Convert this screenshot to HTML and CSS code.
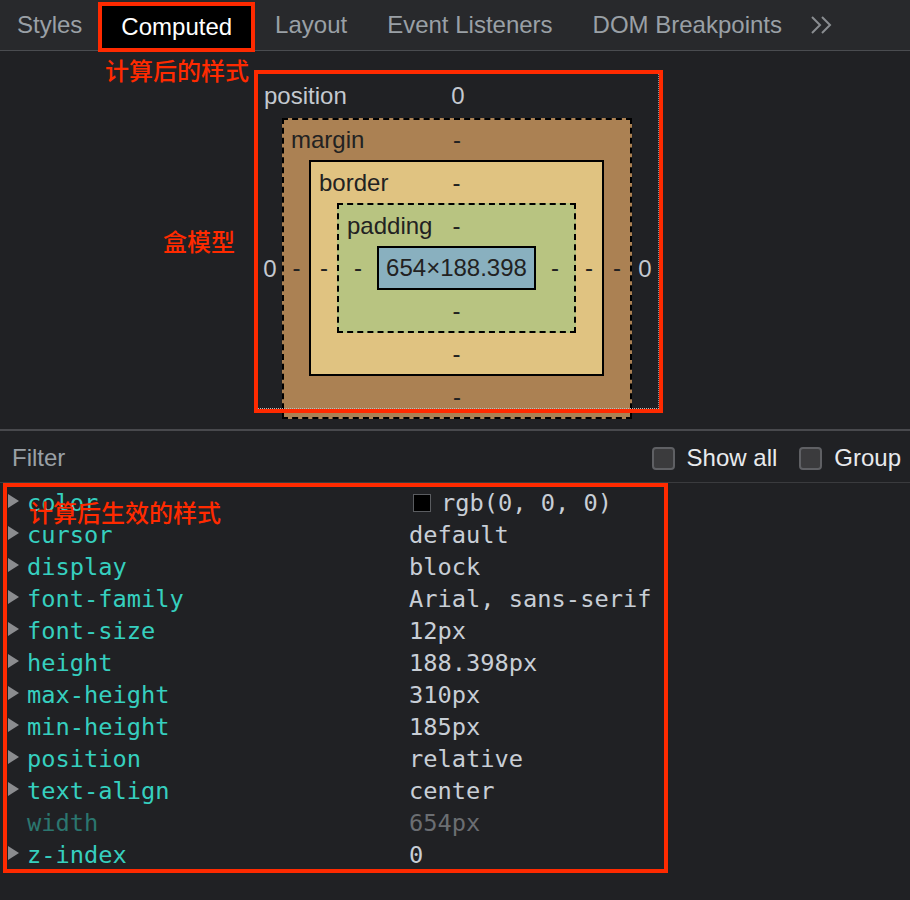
FILE: index.html
```html
<!DOCTYPE html>
<html lang="en">
<head>
<meta charset="utf-8">
<title>Computed</title>
<link rel="stylesheet" href="styles.css">
</head>
<body>
<div class="page">
  <div class="tabbar">
    <div class="tab first">Styles</div>
    <div class="tab active">Computed</div>
    <div class="tab">Layout</div>
    <div class="tab">Event Listeners</div>
    <div class="tab">DOM Breakpoints</div>
    <div class="more">
      <svg width="24" height="20" viewBox="0 0 24 20"><polyline points="2,2 10,10 2,18" fill="none" stroke="#8a8d91" stroke-width="2"/><polyline points="12,2 20,10 12,18" fill="none" stroke="#8a8d91" stroke-width="2"/></svg>
    </div>
  </div>

  <div class="bm-panel">
    <div class="bm bm-position">
      <div class="bm-top"><span class="bm-label">position</span><span class="bm-val">0</span><span></span></div>
      <div class="bm-side">0</div>
      <div class="bm bm-margin">
        <div class="bm-top"><span class="bm-label">margin</span><span class="bm-val">-</span><span></span></div>
        <div class="bm-side">-</div>
        <div class="bm bm-border">
          <div class="bm-top"><span class="bm-label">border</span><span class="bm-val">-</span><span></span></div>
          <div class="bm-side">-</div>
          <div class="bm bm-padding">
            <div class="bm-top"><span class="bm-label">padding</span><span class="bm-val">-</span><span></span></div>
            <div class="bm-side">-</div>
            <div class="bm-content">654×188.398</div>
            <div class="bm-side">-</div>
            <div class="bm-bottom">-</div>
          </div>
          <div class="bm-side">-</div>
          <div class="bm-bottom">-</div>
        </div>
        <div class="bm-side">-</div>
        <div class="bm-bottom">-</div>
      </div>
      <div class="bm-side">0</div>
    </div>
  </div>

  <div class="filter-row">
    <span class="filter">Filter</span>
    <div class="checks">
      <label class="check"><span class="box"></span>Show all</label>
      <label class="check"><span class="box"></span>Group</label>
    </div>
  </div>

  <div class="props">
    <div class="prop"><span class="tri"></span><span class="name">color</span><span class="val"><span class="swatch"></span>rgb(0, 0, 0)</span></div>
    <div class="prop"><span class="tri"></span><span class="name">cursor</span><span class="val">default</span></div>
    <div class="prop"><span class="tri"></span><span class="name">display</span><span class="val">block</span></div>
    <div class="prop"><span class="tri"></span><span class="name">font-family</span><span class="val">Arial, sans-serif</span></div>
    <div class="prop"><span class="tri"></span><span class="name">font-size</span><span class="val">12px</span></div>
    <div class="prop"><span class="tri"></span><span class="name">height</span><span class="val">188.398px</span></div>
    <div class="prop"><span class="tri"></span><span class="name">max-height</span><span class="val">310px</span></div>
    <div class="prop"><span class="tri"></span><span class="name">min-height</span><span class="val">185px</span></div>
    <div class="prop"><span class="tri"></span><span class="name">position</span><span class="val">relative</span></div>
    <div class="prop"><span class="tri"></span><span class="name">text-align</span><span class="val">center</span></div>
    <div class="prop dim"><span class="notri"></span><span class="name">width</span><span class="val">654px</span></div>
    <div class="prop"><span class="tri"></span><span class="name">z-index</span><span class="val">0</span></div>
  </div>

  <div class="note note-computed">计算后的样式</div>
  <div class="note note-box">盒模型</div>
  <div class="note note-props">计算后生效的样式</div>
  <div class="mark mark-box"></div>
  <div class="mark mark-props"></div>
</div>
</body>
</html>
```

FILE: styles.css
```css
* { box-sizing: border-box; }

html, body {
  margin: 0;
  padding: 0;
  background: #202124;
}

.page {
  position: relative;
  width: 910px;
  height: 900px;
  overflow: hidden;
  font-family: "Liberation Sans", Arial, sans-serif;
  font-size: 24px;
}

/* Tabs */
.tabbar {
  display: flex;
  height: 51px;
  background: #28292c;
  border-bottom: 1px solid #4a4c50;
}
.tab {
  display: flex;
  align-items: center;
  padding: 0 20px;
  color: #9aa0a6;
  white-space: nowrap;
}
.tab.first { padding: 0 16px 0 17px; }
.tab.active {
  margin-top: 2px;
  height: 50px;
  padding: 0 19px;
  margin-bottom: -1px;
  background: #000;
  color: #fff;
  border: 4px solid #ff2a00;
}
.more {
  display: flex;
  align-items: center;
  margin-left: 8px;
}
.more svg { display: block; }

/* Box model */
.bm-panel {
  height: 380px;
  padding: 22px 0 0 6px;
  display: flex;
  justify-content: center;
  align-items: flex-start;
  border-bottom: 2px solid #48494d;
}
.bm {
  display: grid;
  position: relative;
}
.bm-top {
  grid-column: 1 / -1;
  display: grid;
  grid-template-columns: 1fr auto 1fr;
  align-items: center;
}
.bm-label { justify-self: start; padding-left: 8px; }
.bm-side {
  display: flex;
  align-items: center;
  justify-content: center;
}
.bm-bottom {
  grid-column: 1 / -1;
  display: flex;
  align-items: center;
  justify-content: center;
}

.bm-position {
  width: 402px;
  height: 336px;
  border: 1px dotted #8c8f94;
  color: #c4c9d0;
  grid-template-columns: 24px 350px 26px;
  grid-template-rows: 44px 301px;
}
.bm-position::after {
  content: "";
  position: absolute;
  left: -1px;
  right: -1px;
  bottom: -1px;
  border-bottom: 1px dotted #b9bcc0;
  z-index: 2;
}
.bm-position > .bm-top .bm-label { padding-left: 6px; }

.bm-margin {
  background: #ab8153;
  border: 2px dashed #000;
  color: #222;
  grid-template-columns: 25px 295px 26px;
  grid-template-rows: 40px 216px 41px;
}
.bm-margin > .bm-top .bm-label { padding-left: 7px; }

.bm-border {
  background: #e0c381;
  border: 2px solid #000;
  grid-template-columns: 26px 239px 26px;
  grid-template-rows: 41px 130px 41px;
}

.bm-padding {
  background: #b8c481;
  border: 2px dashed #000;
  grid-template-columns: 38px 159px 38px;
  grid-template-rows: 41px 44px 41px;
}

.bm-content {
  background: #89b0bf;
  border: 2px solid #000;
  display: flex;
  align-items: center;
  justify-content: center;
  color: #222;
}

/* Filter */
.filter-row {
  display: flex;
  align-items: center;
  justify-content: space-between;
  height: 52px;
  padding: 3px 9px 0 12px;
  border-bottom: 1px solid #3a3b3e;
}
.filter { color: #9aa0a6; }
.checks { display: flex; align-items: center; gap: 22px; }
.check {
  display: flex;
  align-items: center;
  color: #e8eaed;
}
.box {
  width: 23px;
  height: 23px;
  margin-right: 12px;
  border: 2px solid #5f6064;
  border-radius: 4px;
  background: #3b3b3d;
}

/* Properties */
.props {
  padding-top: 4px;
  font-family: "DejaVu Sans Mono", "Liberation Mono", monospace;
  font-size: 23.7px;
}
.prop {
  display: grid;
  grid-template-columns: 27px 382px 1fr;
  height: 32px;
  align-items: center;
  white-space: nowrap;
}
.tri {
  width: 0;
  height: 0;
  margin-left: 8px;
  margin-top: -5px;
  border-left: 11px solid #8b8c8f;
  border-top: 7px solid transparent;
  border-bottom: 7px solid transparent;
}
.name { color: #36cfbf; }
.val { color: #c8ced6; display: flex; align-items: center; }
.prop.dim .name { color: #2b766f; }
.prop.dim .val { color: #6b6e72; }
.swatch {
  display: inline-block;
  width: 18px;
  height: 18px;
  margin: 0 10px 0 4px;
  background: #000;
  border: 1px solid #5a5c60;
}

/* Annotations */
.note {
  position: absolute;
  color: #ff2a00;
  font-family: "Noto Sans CJK SC", sans-serif;
  font-size: 24px;
  font-weight: 500;
  line-height: 24px;
  white-space: nowrap;
  z-index: 5;
}
.note-computed { left: 105px; top: 58px; }
.note-box { left: 163px; top: 229px; }
.note-props { left: 29px; top: 500px; }

.mark {
  position: absolute;
  border: 4px solid #ff2a00;
  z-index: 4;
}
.mark-box { left: 254px; top: 70px; width: 409px; height: 343px; }
.mark-props { left: 3px; top: 483px; width: 665px; height: 390px; }
```
